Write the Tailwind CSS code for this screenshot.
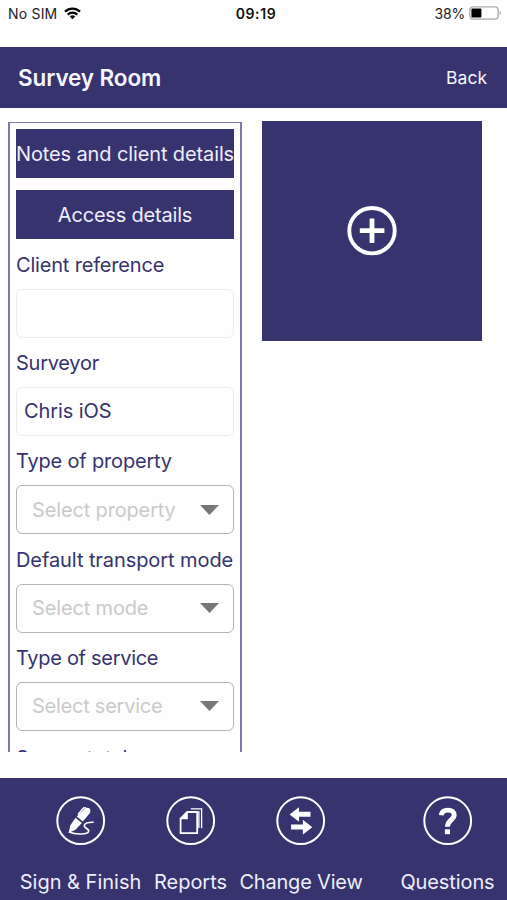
<!DOCTYPE html>
<html lang="en">
<head>
<meta charset="utf-8">
<title>Survey Room</title>
<script src="https://cdn.jsdelivr.net/npm/@tailwindcss/browser@4"></script>
</head>
<body class="w-[507px] h-[900px] overflow-hidden bg-[#fefefe] flex flex-col font-['Inter','Liberation_Sans',sans-serif] text-[#36336f]">
<div class="h-[47px] shrink-0 grid grid-cols-3 items-start pt-[4px] leading-[20px] text-[14px] text-[#222]">
  <div class="flex items-center pl-[8px] gap-[7px]"><span class="whitespace-nowrap tracking-[0.2px]">No SIM</span>
    <svg class="w-[17px] h-[13px] -mt-[2px]" viewBox="0 0 17 13" fill="none" stroke="#000" stroke-width="2.3"><path d="M1 4.7a10.8 10.8 0 0 1 15 0M3.7 7.6a6.9 6.9 0 0 1 9.6 0"/><path d="M8.5 12.3L5.8 9.6a3.9 3.9 0 0 1 5.4 0z" fill="#000" stroke="none"/></svg>
  </div>
  <div class="text-center font-semibold text-[#111] pl-[5px] tracking-[0.6px]">09:19</div>
  <div class="flex items-center justify-end pr-[6px] gap-[4px]"><span class="tracking-[-0.2px]">38%</span>
    <svg class="w-[32px] h-[14px] -mt-[2px]" viewBox="0 0 32 14"><rect x=".8" y=".8" width="28.4" height="12.4" rx="3.4" fill="none" stroke="#aaa" stroke-width="1.3"/><rect x="2.4" y="2.4" width="10" height="9.2" rx="1" fill="#000"/><path d="M30.6 5v4q1.4-.6 1.4-2t-1.4-2z" fill="#aaa"/></svg>
  </div>
</div>
<header class="h-[61px] shrink-0 bg-[#36336f] flex items-center justify-between pl-[18px] pr-[20px] pt-[1px] text-[#f6f5ff]">
  <h1 class="text-[22.5px] font-semibold tracking-[-0.1px]">Survey Room</h1>
  <span class="text-[17.5px] pt-px">Back</span>
</header>
<main class="h-[670px] shrink-0 flex items-start pl-[8px]">
  <section class="mt-[14px] w-[234px] h-[630px] overflow-hidden border-x-2 border-t-[1px] border-[#7c79a8] px-[6px] pt-[6px] text-[20px] whitespace-nowrap">
    <div class="h-[49px] bg-[#36336f] text-[#eeedfa] flex items-center justify-center pt-px"><span class="tracking-[-0.12px]">Notes and client details</span></div>
    <div class="mt-[12px] h-[49px] bg-[#36336f] text-[#eeedfa] flex items-center justify-center pt-px"><span class="tracking-[-0.2px]">Access details</span></div>
    <div class="h-[50px] flex items-center pt-px"><span class="tracking-[-0.18px]">Client reference</span></div>
    <div class="h-[49px] rounded-[6px] border border-[#ececec]"></div>
    <div class="h-[49px] flex items-center"><span class="tracking-[-0.25px]">Surveyor</span></div>
    <div class="h-[49px] rounded-[6px] border border-[#ececec] flex items-center pl-[7px] pb-px"><span class="tracking-[-0.1px]">Chris iOS</span></div>
    <div class="h-[49.4px] flex items-center pt-px"><span class="tracking-[-0.18px]">Type of property</span></div>
    <div class="h-[49px] rounded-[6px] border border-[#b5b5b5] flex items-center justify-between pl-[15px] pr-[14px] text-[#cacacc]"><span class="tracking-[-0.15px]">Select property</span><svg class="w-[19px] h-[10px]" viewBox="0 0 19 10"><path d="M0 0h19L9.5 10z" fill="#777"/></svg></div>
    <div class="h-[49.3px] flex items-center pt-px"><span class="tracking-[-0.08px]">Default transport mode</span></div>
    <div class="h-[49px] rounded-[6px] border border-[#b5b5b5] flex items-center justify-between pl-[15px] pr-[14px] text-[#cacacc]"><span class="tracking-[-0.15px]">Select mode</span><svg class="w-[19px] h-[10px]" viewBox="0 0 19 10"><path d="M0 0h19L9.5 10z" fill="#777"/></svg></div>
    <div class="h-[49.3px] flex items-center pt-px"><span class="tracking-[-0.3px]">Type of service</span></div>
    <div class="h-[49px] rounded-[6px] border border-[#b5b5b5] flex items-center justify-between pl-[15px] pr-[14px] text-[#cacacc]"><span class="tracking-[-0.25px]">Select service</span><svg class="w-[19px] h-[10px]" viewBox="0 0 19 10"><path d="M0 0h19L9.5 10z" fill="#777"/></svg></div>
    <div class="h-[49.3px] flex items-center pt-[4px]"><span class="tracking-[-0.1px]">Survey total</span></div>
  </section>
  <button class="ml-[20px] mt-[13px] w-[220px] h-[220px] bg-[#36336f] flex items-center justify-center" aria-label="Add room">
    <svg class="w-[50px] h-[50px]" viewBox="0 0 50 50" fill="none" stroke="#fff"><circle cx="25" cy="24.7" r="22.7" stroke-width="3.9"/><path d="M12.8 24.7h24.6M25 12.4v24.6" stroke-width="4.8"/></svg>
  </button>
</main>
<footer class="h-[122px] shrink-0 bg-[#36336f] text-[#eeedfa] text-[20px] whitespace-nowrap flex items-start pt-[18px] pl-[20px] pr-[12px]">
  <div class="w-[121px] flex flex-col items-center gap-[21px]">
    <svg class="w-[50px] h-[50px]" viewBox="0 0 50 50" fill="none" stroke="#fff"><circle cx="24.7" cy="24.7" r="23.4" stroke-width="2"/><path d="M28.3 13q4.2-2.6 6 .6.7 2.4-1.2 4.5l-6.3 7.5-6-5.1z" fill="#fff" stroke="none"/><path d="M19.6 21.8l6.2 5.2-6.3 6.8-7 3.2 1.9-7.8z" fill="#fff" stroke="none"/><path d="M22 18.4l5.5-6.5 2.6-.2" stroke-width="1.5"/><path d="M13.3 36c5 2.3 17.6 3.2 19.3-.3 1.5-3.2-5.8-3.2-4.1-6.8 1-2.1 4.6-2.7 9.2-2.6" stroke-width="1.6"/></svg>
    <span>Sign &amp; Finish</span>
  </div>
  <div class="ml-[13px] w-[73px] flex flex-col items-center gap-[21px]">
    <svg class="w-[50px] h-[50px]" viewBox="0 0 50 50" fill="none" stroke="#fff"><circle cx="24.7" cy="24.7" r="23.4" stroke-width="2"/><path d="M21.2 16h10v21.2H14.6V22.7z" stroke-width="1.8"/><path d="M21.8 15.3v8h-7.7z" fill="#fff" stroke="none"/><path d="M24.8 12.8h10.8v19.4M31.3 15.9h1.6v16" stroke-width="1.3"/></svg>
    <span>Reports</span>
  </div>
  <div class="ml-[13px] w-[122px] flex flex-col items-center gap-[21px]">
    <svg class="w-[50px] h-[50px]" viewBox="0 0 50 50"><circle cx="24.7" cy="24.7" r="23.4" fill="none" stroke="#fff" stroke-width="2"/><path d="M13.6 18.4l9.4-7.2v4.6h11.5v5H23v4.9zM36.3 31.2l-9.4 7.2v-4.8H15.1v-5h11.8v-4.8z" fill="#fff"/></svg>
    <span class="tracking-[-0.2px]">Change View</span>
  </div>
  <div class="ml-[38px] w-[95px] flex flex-col items-center gap-[21px]">
    <svg class="w-[50px] h-[50px]" viewBox="0 0 50 50" fill="none" stroke="#fff"><circle cx="24.7" cy="24.7" r="23.4" stroke-width="2"/><path d="M18.3 19.2c.4-3.6 2.7-5.1 6.6-5.1 4 0 6.3 1.9 6.3 4.9 0 4.9-6.8 4.9-6.8 11.7" stroke-width="4.9"/><path d="M21.9 33.3h5.1v4.9h-5.1z" fill="#fff" stroke="none"/></svg>
    <span class="tracking-[-0.1px]">Questions</span>
  </div>
</footer>
</body>
</html>
